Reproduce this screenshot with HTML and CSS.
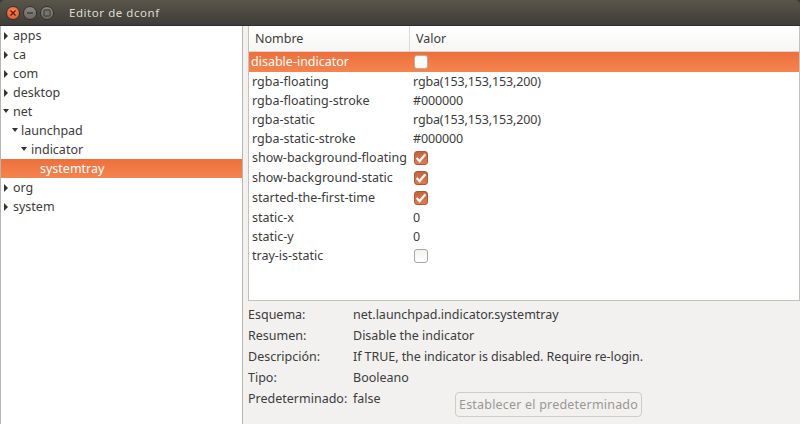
FILE: index.html
```html
<!DOCTYPE html>
<html lang="es">
<head>
<meta charset="utf-8">
<title>Editor de dconf</title>
<link rel="stylesheet" href="styles.css">
</head>
<body>
<div class="window">
  <header class="titlebar">
    <div class="controls">
      <span class="wbtn close"><svg viewBox="0 0 8 8" width="8" height="8"><path d="M1.5 1.5l5 5M6.5 1.5l-5 5" stroke="#5a1a08" stroke-width="1.3" fill="none"/></svg></span>
      <span class="wbtn min"><svg viewBox="0 0 8 8" width="8" height="8"><path d="M1 4h6" stroke="#3c3b37" stroke-width="1.4" fill="none"/></svg></span>
      <span class="wbtn max"><svg viewBox="0 0 8 8" width="8" height="8"><rect x="1" y="1" width="6" height="6" rx="1" stroke="#4a4944" stroke-width="1.4" fill="#77756d"/></svg></span>
    </div>
    <span class="title">Editor de dconf</span>
  </header>
  <div class="main">
    <nav class="sidebar">
      <div class="node"><i class="arrow right"></i>apps</div>
      <div class="node"><i class="arrow right"></i>ca</div>
      <div class="node"><i class="arrow right"></i>com</div>
      <div class="node"><i class="arrow right"></i>desktop</div>
      <div class="node"><i class="arrow down"></i>net</div>
      <div class="node d1"><i class="arrow down"></i>launchpad</div>
      <div class="node d2"><i class="arrow down"></i>indicator</div>
      <div class="node d3 selected">systemtray</div>
      <div class="node"><i class="arrow right"></i>org</div>
      <div class="node"><i class="arrow right"></i>system</div>
    </nav>
    <section class="content">
      <div class="table">
        <div class="thead"><div class="th name">Nombre</div><div class="th">Valor</div></div>
        <div class="row selected tall first"><span class="key">disable-indicator</span><span class="cb off"></span></div>
        <div class="row"><span class="key">rgba-floating</span><span class="val">rgba(153,153,153,200)</span></div>
        <div class="row"><span class="key">rgba-floating-stroke</span><span class="val">#000000</span></div>
        <div class="row"><span class="key">rgba-static</span><span class="val">rgba(153,153,153,200)</span></div>
        <div class="row"><span class="key">rgba-static-stroke</span><span class="val">#000000</span></div>
        <div class="row tall"><span class="key">show-background-floating</span><span class="cb on"><svg viewBox="0 0 14 14" width="14" height="14"><path d="M2.6 7l3 3.2 5.8-7" stroke="#fff" stroke-width="2.2" fill="none"/></svg></span></div>
        <div class="row tall"><span class="key">show-background-static</span><span class="cb on"><svg viewBox="0 0 14 14" width="14" height="14"><path d="M2.6 7l3 3.2 5.8-7" stroke="#fff" stroke-width="2.2" fill="none"/></svg></span></div>
        <div class="row tall"><span class="key">started-the-first-time</span><span class="cb on"><svg viewBox="0 0 14 14" width="14" height="14"><path d="M2.6 7l3 3.2 5.8-7" stroke="#fff" stroke-width="2.2" fill="none"/></svg></span></div>
        <div class="row"><span class="key">static-x</span><span class="val">0</span></div>
        <div class="row"><span class="key">static-y</span><span class="val">0</span></div>
        <div class="row tall"><span class="key">tray-is-static</span><span class="cb off"></span></div>
      </div>
      <div class="details">
        <div class="dl">Esquema:</div><div>net.launchpad.indicator.systemtray</div>
        <div class="dl">Resumen:</div><div>Disable the indicator</div>
        <div class="dl">Descripción:</div><div class="desc">If TRUE, the indicator is disabled. Require re-login.</div>
        <div class="dl">Tipo:</div><div>Booleano</div>
        <div class="dl">Predeterminado:</div>
        <div class="last"><span>false</span><button class="reset" disabled>Establecer el predeterminado</button></div>
      </div>
    </section>
  </div>
</div>
</body>
</html>
```
FILE: styles.css
```css
* { box-sizing: border-box; }
html, body { margin: 0; padding: 0; }
body {
  width: 800px; height: 424px; overflow: hidden; background: #3c3b37;
  font-family: "Noto Sans", "Open Sans", sans-serif;
  font-size: 12.5px; color: #3c3c3c;
}
.window { display: flex; flex-direction: column; height: 424px; }
.titlebar {
  height: 26px; flex: none; display: flex; align-items: center;
  background: linear-gradient(#59554a, #3e3d38);
  border-bottom: 1px solid #2e2d2a;
  border-radius: 5px 5px 0 0; color: #dfdbd2;
  padding-left: 6px;
}
.controls { display: flex; gap: 3px; width: 63px; }
.wbtn {
  width: 14px; height: 14px; border-radius: 50%; display: flex; align-items: center; justify-content: center;
  background: linear-gradient(#8a8880, #6a6860);
  border: 1px solid #33322e;
}
.wbtn.close { background: radial-gradient(circle at 50% 35%, #f88a5a, #e2501f); }
.title { font-size: 11.5px; letter-spacing: 0.55px; }
.main { flex: 1; display: flex; background: #f2f1f0; min-height: 0; }
.sidebar {
  width: 243px; flex: none; background: #fff; border-right: 1px solid #b9b6b2;
  border-left: 1px solid #b9b6b2;
}
.node { height: 19px; line-height: 19px; padding-left: 12px; position: relative; white-space: nowrap; }
.node.d1 { padding-left: 20px; }
.node.d2 { padding-left: 30px; }
.node.d3 { padding-left: 39px; }
.selected { background: linear-gradient(#ed703c, #f5844f); color: #fff; }
.arrow { position: absolute; top: 6px; left: 3px; width: 0; height: 0; }
.arrow.right { border-left: 4px solid #333; border-top: 4px solid transparent; border-bottom: 4px solid transparent; }
.arrow.down { top: 7px; left: 2px; border-top: 4px solid #333; border-left: 3.5px solid transparent; border-right: 3.5px solid transparent; }
.d1 .arrow { left: 11px; }
.d2 .arrow { left: 20px; }
.content { flex: 1; min-width: 0; padding-left: 5px; display: flex; flex-direction: column; }
.table {
  height: 275px; flex: none; background: #fff; border: 1px solid #c5c2bd; border-top: 0;
}
.thead { height: 26px; display: flex; background: linear-gradient(#fff, #f7f6f5); border-bottom: 1px solid #d8d5d1; }
.th { line-height: 25px; padding-left: 6px; }
.th.name { width: 161px; border-right: 1px solid #dcdad6; }
.row { height: 19px; display: flex; align-items: center; }
.row.tall { height: 20px; }
.row.tall .key { padding-bottom: 2px; }
.key { width: 164px; flex: none; padding-left: 3px; white-space: nowrap; }
.first .key { padding-left: 2px; }
.val { letter-spacing: -0.14px; }
.desc { letter-spacing: -0.06px; }
.cb {
  width: 14px; height: 14px; margin-left: 1px; border-radius: 3px; border: 1px solid #a8a5a0;
  background: linear-gradient(#f4f3f2, #fff); display: flex; align-items: center; justify-content: center;
}
.cb svg { flex: none; }
.cb.on { background: linear-gradient(#c8643a, #e07a50); border-color: #a85a3a; }
.selected .cb { border-color: #c9a896; background: #fafafa; }
.details {
  flex: 1; display: grid; grid-template-columns: 105px 1fr; grid-auto-rows: 21px; padding-top: 3px; align-items: center; white-space: nowrap;
}
.last { display: flex; align-items: center; height: 21px; position: relative; }
.reset {
  position: absolute; left: 102px; top: 4px; width: 187px; height: 25px;
  background: #f2f1f0; border: 1px solid #cfccc8; border-radius: 4px; color: #9a9793;
  font: inherit; letter-spacing: 0.2px; padding: 0;
}
```
